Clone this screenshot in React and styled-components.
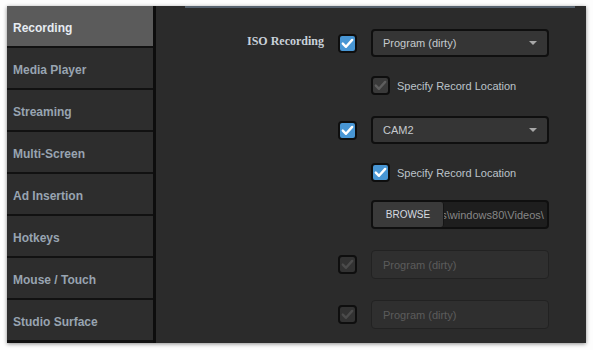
import styled, { createGlobalStyle } from 'styled-components';

const GlobalStyle = createGlobalStyle`
  html, body {
    margin: 0;
    background: #fdfdfd;
  }
  body {
    font-family: "Liberation Sans", Arial, sans-serif;
  }
`;

const Frame = styled.div`
  width: 593px;
  height: 350px;
  box-sizing: border-box;
  padding: 6px 7px 7px 7px;
`;

const Panel = styled.div`
  display: flex;
  height: 337px;
  background: #2a2a2a;
  box-shadow: 0 1px 4px rgba(0, 0, 0, 0.45);
  overflow: hidden;
`;

const Sidebar = styled.nav`
  width: 146px;
  flex-shrink: 0;
  display: flex;
  flex-direction: column;
  border-right: 3px solid #0d0d0d;
  background: #111;
`;

const NavItem = styled.div`
  height: 42px;
  box-sizing: border-box;
  flex-shrink: 0;
  display: flex;
  align-items: center;
  padding: 3px 0 0 6px;
  border-bottom: 2px solid #111;
  background: ${(p) => (p.$active ? '#5b5b5b' : '#2d2d2d')};
  color: ${(p) => (p.$active ? '#e6ecf2' : '#98a4b1')};
  font-size: 12px;
  font-weight: bold;
`;

const Content = styled.section`
  flex: 1;
  display: flex;
  flex-direction: column;
  background: #2b2b2b;
`;

const Strip = styled.div`
  height: 2px;
  margin: 0 11px 0 29px;
  background: #56626e;
`;

const Form = styled.div`
  display: grid;
  grid-template-columns: 168px 19px 178px;
  grid-template-rows: 29px 22px 29px 19px 32px 32px 29px;
  column-gap: 14px;
  row-gap: 18px;
  align-items: start;
  padding-top: 21px;
`;

const Label = styled.div`
  justify-self: end;
  padding-top: 5px;
  font-family: "Liberation Serif", "Times New Roman", serif;
  font-weight: bold;
  font-size: 12px;
  color: #c9d1da;
`;

const Box = styled.span`
  width: 19px;
  height: 19px;
  box-sizing: border-box;
  display: inline-flex;
  align-items: center;
  justify-content: center;
  flex-shrink: 0;
  margin-top: ${(p) => (p.$inset ? 5 : 0)}px;
  border: 2px solid #0e0e0e;
  border-radius: 4px;
  background: ${(p) =>
    p.$tone === 'on' ? '#4896d4' : p.$tone === 'dim' ? '#3a3a3a' : '#323232'};
  color: ${(p) =>
    p.$tone === 'on' ? '#ffffff' : p.$tone === 'dim' ? '#5e5e5e' : '#4b4b4b'};
`;

const Check = ({ tone, inset }) => (
  <Box $tone={tone} $inset={inset}>
    <svg width="15" height="15" viewBox="0 0 15 15">
      <path
        d="M2.8 7.6 L6 10.8 L12.2 3.9"
        fill="none"
        stroke="currentColor"
        strokeWidth="2.4"
        strokeLinecap="round"
        strokeLinejoin="round"
      />
    </svg>
  </Box>
);

const Select = styled.div`
  grid-column: 3;
  height: 28px;
  box-sizing: border-box;
  display: flex;
  align-items: center;
  justify-content: space-between;
  padding: 0 10px 0 10px;
  border: 2px solid #0f0f0f;
  border-radius: 4px;
  background: #353535;
  color: #c6cace;
  font-size: 11px;
`;

const Caret = styled.span`
  width: 0;
  height: 0;
  border-left: 4px solid transparent;
  border-right: 4px solid transparent;
  border-top: 4px solid #a8a8a8;
`;

const Field = styled.div`
  grid-column: 3;
  height: 29px;
  box-sizing: border-box;
  display: flex;
  align-items: center;
  padding-left: 11px;
  border: 1px solid #222;
  border-radius: 4px;
  background: #2f2f2f;
  color: #5c5c5c;
  font-size: 11px;
`;

const Option = styled.div`
  grid-column: 3;
  display: flex;
  align-items: center;
  gap: 7px;
  height: 19px;
  color: #bcc3ca;
  font-size: 11px;
`;

const BrowseRow = styled.div`
  grid-column: 3;
  height: 29px;
  box-sizing: border-box;
  display: flex;
  border: 2px solid #0f0f0f;
  border-radius: 4px;
  overflow: hidden;
  background: #1e1e1e;
`;

const BrowseButton = styled.div`
  width: 70px;
  flex-shrink: 0;
  display: flex;
  align-items: center;
  justify-content: center;
  background: #3a3a3a;
  border-right: 1px solid #151515;
  border-radius: 0 3px 3px 0;
  color: #d6dbe0;
  font-size: 10px;
`;

const PathBox = styled.div`
  flex: 1;
  overflow: hidden;
  display: flex;
  align-items: center;
  white-space: nowrap;
  color: #878787;
  font-size: 11px;
`;

const PathText = styled.span`
  margin-left: ${(p) => p.$shift}px;
`;

const navItems = [
  'Recording',
  'Media Player',
  'Streaming',
  'Multi-Screen',
  'Ad Insertion',
  'Hotkeys',
  'Mouse / Touch',
  'Studio Surface',
];

const App = () => (
  <>
    <GlobalStyle />
    <Frame>
      <Panel>
        <Sidebar>
          {navItems.map((item, i) => (
            <NavItem key={item} $active={i === 0}>
              {item}
            </NavItem>
          ))}
        </Sidebar>
        <Content>
          <Strip />
          <Form>
            <Label>ISO Recording</Label>
            <Check tone="on" inset />
            <Select>
              Program (dirty)
              <Caret />
            </Select>

            <Option>
              <Check tone="dim" />
              Specify Record Location
            </Option>

            <span />
            <Check tone="on" inset />
            <Select>
              CAM2
              <Caret />
            </Select>

            <Option>
              <Check tone="on" />
              Specify Record Location
            </Option>

            <BrowseRow>
              <BrowseButton>BROWSE</BrowseButton>
              <PathBox>
                <PathText $shift={-40}>C:\Users\windows80\Videos\</PathText>
              </PathBox>
            </BrowseRow>

            <span />
            <Check tone="off" inset />
            <Field>Program (dirty)</Field>

            <span />
            <Check tone="off" inset />
            <Field>Program (dirty)</Field>
          </Form>
        </Content>
      </Panel>
    </Frame>
  </>
);

export default App;
